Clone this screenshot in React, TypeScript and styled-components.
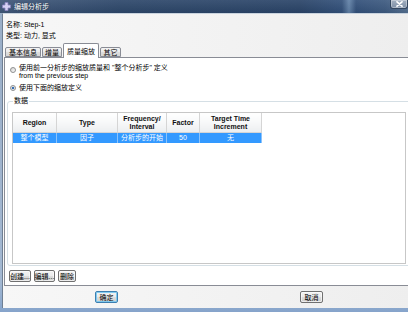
import React from 'react';
import styled, { createGlobalStyle } from 'styled-components';

const GlobalStyle = createGlobalStyle`
  html, body {
    margin: 0;
    padding: 0;
    background: #fff;
  }
  body {
    font-family: "Liberation Sans", "Noto Sans CJK SC", sans-serif;
    font-size: 7px;
    color: #000;
  }
`;

const Viewport = styled.div`
  width: 408px;
  height: 312px;
  overflow: hidden;
`;

const Frame = styled.div`
  width: 414px;
  height: 312px;
  display: flex;
  flex-direction: column;
  background: linear-gradient(180deg, #9aaec7 0%, #a3b8d2 90%, #86a4cb 100%);
`;

const TitleBar = styled.div`
  flex: none;
  height: 13px;
  display: flex;
  align-items: center;
  padding-left: 2px;
  background:
    linear-gradient(180deg, rgba(255, 255, 255, 0.08), rgba(0, 0, 0, 0.06)),
    linear-gradient(90deg, #3f5779 0px, #2d476a 120px, #2a4468 300px, #32507a 342px, #6282a8 349px, #32507a 356px, #3d5a80 385px, #5a7594 414px);
`;

const TitleText = styled.span`
  margin-left: 3px;
  color: #fff;
  line-height: 13px;
  text-shadow: 0 0 2px rgba(0, 0, 0, 0.5);
`;

const CloseButton = styled.div`
  margin-left: auto;
  margin-right: 6px;
  align-self: flex-start;
  width: 18px;
  height: 9px;
  display: flex;
  align-items: center;
  justify-content: center;
  box-sizing: border-box;
  border: 1px solid #33465e;
  border-top: none;
  border-radius: 0 0 3px 3px;
  background: linear-gradient(180deg, #a3b0c0, #7d8ea5);
  box-shadow: inset 0 0 0 1px rgba(255, 255, 255, 0.35);
`;

const Body = styled.div`
  flex: 1;
  display: flex;
  flex-direction: column;
  margin: 0 0 4px 2px;
  border-left: 1px solid #6f7f93;
  border-top: 1px solid #c9d3de;
  padding-top: 4.5px;
  background: linear-gradient(90deg, #f7f7f7, #eeeeee);
`;

const InfoRow = styled.div`
  height: 11.5px;
  line-height: 11.5px;
  padding-left: 3px;
  white-space: nowrap;
`;

const TabStrip = styled.div`
  flex: none;
  height: 14px;
  margin-top: 1.5px;
  padding-left: 2px;
  display: flex;
  align-items: flex-end;
`;

const Tab = styled.div<{ $active?: boolean; $w: number }>`
  box-sizing: border-box;
  width: ${p => p.$w}px;
  height: ${p => (p.$active ? 15 : 10)}px;
  margin-bottom: ${p => (p.$active ? -1 : 0)}px;
  margin-right: 1px;
  display: flex;
  align-items: center;
  justify-content: center;
  border: 1px solid #898c95;
  border-bottom: ${p => (p.$active ? 'none' : '1px solid #898c95')};
  border-radius: 2px 2px 0 0;
  background: ${p =>
    p.$active ? '#ffffff' : 'linear-gradient(180deg, #f3f3f3 0%, #ebebeb 50%, #dedede 51%, #d6d6d6 100%)'};
  position: relative;
  z-index: ${p => (p.$active ? 1 : 0)};
  white-space: nowrap;
`;

const Panel = styled.div`
  flex: 1;
  display: flex;
  flex-direction: column;
  margin-left: 1px;
  margin-right: 2px;
  border: 1px solid #898c95;
  background: #ffffff;
  padding: 6px 0 0 1px;
`;

const RadioRow = styled.div<{ $gap?: number }>`
  display: flex;
  align-items: flex-start;
  padding-left: 4px;
  margin-top: ${p => p.$gap ?? 0}px;
  line-height: 8px;
`;

const RadioCircle = styled.span<{ $checked?: boolean; $top: number }>`
  flex: none;
  box-sizing: border-box;
  width: 6px;
  height: 6px;
  margin-top: ${p => p.$top}px;
  margin-right: 3px;
  border: 1px solid #8e8f8f;
  border-radius: 50%;
  background: ${p =>
    p.$checked
      ? 'radial-gradient(circle, #2d64a8 0, #3c78c0 1.3px, #e8e8e8 1.6px, #f8f8f8 100%)'
      : 'linear-gradient(135deg, #d4d4d4, #fafafa)'};
`;

const Group = styled.fieldset`
  margin: 5px 0 0 1px;
  padding: 7px 4px 1px 4px;
  border: 1px solid #d5dfe5;
  border-radius: 3px;
`;

const GroupLabel = styled.legend`
  padding: 0 1px;
  margin-left: 1px;
  line-height: 8px;
`;

const TableBox = styled.div`
  box-sizing: border-box;
  width: 394px;
  height: 152px;
  border: 1px solid #c7c7c7;
  background: #ffffff;
`;

const Grid = styled.table`
  border-collapse: collapse;
  table-layout: fixed;
`;

const HeadCell = styled.th<{ $w: number }>`
  width: ${p => p.$w}px;
  height: 19px;
  padding: 0;
  font-weight: bold;
  line-height: 8px;
  text-align: center;
  color: #111;
  border-right: 1px solid #d5d5d5;
  border-bottom: 1px solid #d5d5d5;
  background: linear-gradient(180deg, #ffffff 0%, #f7f8f9 50%, #eceef0 100%);
`;

const Cell = styled.td`
  height: 10px;
  padding: 0;
  line-height: 10px;
  text-align: center;
  color: #ffffff;
  background: #3399ff;
  border-right: 1px solid #8cc3fb;
  white-space: nowrap;
`;

const ButtonRow = styled.div`
  display: flex;
  gap: 3px;
  margin-top: 4px;
  padding-left: 3px;
`;

const Button = styled.div<{ $w: number; $focused?: boolean }>`
  box-sizing: border-box;
  width: ${p => p.$w}px;
  height: 12px;
  display: flex;
  align-items: center;
  justify-content: center;
  border: 1px solid ${p => (p.$focused ? '#3c7fb1' : '#707070')};
  border-radius: 2px;
  background: linear-gradient(180deg, #f2f2f2 0%, #ebebeb 50%, #dddddd 51%, #cfcfcf 100%);
  box-shadow: inset 0 0 0 1px ${p => (p.$focused ? 'rgba(120, 200, 240, 0.9)' : 'rgba(255, 255, 255, 0.6)')};
  white-space: nowrap;
`;

const Footer = styled.div`
  flex: none;
  height: 22px;
  display: flex;
  align-items: center;
  gap: 182px;
  padding-left: 92px;
`;

const TitleIcon = () => (
  <svg width="9" height="9" viewBox="0 0 9 9">
    <path d="M3 0.5h3v2.5h2.5v3H6v2.5H3V6H0.5V3H3z" fill="#d6d2f4" stroke="#8a84c0" strokeWidth="0.8" />
  </svg>
);

const CloseIcon = () => (
  <svg width="7" height="6" viewBox="0 0 7 6">
    <path d="M1 0.8L6 5.2M6 0.8L1 5.2" stroke="#fff" strokeWidth="1.6" strokeLinecap="round" />
  </svg>
);

const tabs = [
  { label: '基本信息', w: 36 },
  { label: '增量', w: 20 },
  { label: '质量缩放', w: 36, active: true },
  { label: '其它', w: 21 },
];

const columns = [
  { w: 43, label: ['Region'] },
  { w: 60, label: ['Type'] },
  { w: 48, label: ['Frequency/', 'Interval'] },
  { w: 32, label: ['Factor'] },
  { w: 61, label: ['Target Time', 'Increment'] },
];

const rows = [['整个模型', '因子', '分析步的开始', '50', '无']];

export default function App() {
  return (
    <Viewport>
      <GlobalStyle />
      <Frame>
        <TitleBar>
          <TitleIcon />
          <TitleText>编辑分析步</TitleText>
          <CloseButton>
            <CloseIcon />
          </CloseButton>
        </TitleBar>
        <Body>
          <InfoRow>名称: Step-1</InfoRow>
          <InfoRow>类型: 动力, 显式</InfoRow>
          <TabStrip>
            {tabs.map(t => (
              <Tab key={t.label} $w={t.w} $active={t.active}>
                {t.label}
              </Tab>
            ))}
          </TabStrip>
          <Panel>
            <RadioRow>
              <RadioCircle $top={3} />
              <div>
                使用前一分析步的缩放质量和 "整个分析步" 定义
                <br />
                from the previous step
              </div>
            </RadioRow>
            <RadioRow $gap={4}>
              <RadioCircle $checked $top={1} />
              <div>使用下面的缩放定义</div>
            </RadioRow>
            <Group>
              <GroupLabel>数据</GroupLabel>
              <TableBox>
                <Grid>
                  <thead>
                    <tr>
                      {columns.map(c => (
                        <HeadCell key={c.label[0]} $w={c.w}>
                          {c.label.map((l, i) => (
                            <React.Fragment key={l}>
                              {i > 0 && <br />}
                              {l}
                            </React.Fragment>
                          ))}
                        </HeadCell>
                      ))}
                    </tr>
                  </thead>
                  <tbody>
                    {rows.map(r => (
                      <tr key={r[0]}>
                        {r.map((v, i) => (
                          <Cell key={i}>{v}</Cell>
                        ))}
                      </tr>
                    ))}
                  </tbody>
                </Grid>
              </TableBox>
            </Group>
            <ButtonRow>
              <Button $w={22}>创建...</Button>
              <Button $w={21}>编辑...</Button>
              <Button $w={18}>删除</Button>
            </ButtonRow>
          </Panel>
          <Footer>
            <Button $w={23} $focused>确定</Button>
            <Button $w={23}>取消</Button>
          </Footer>
        </Body>
      </Frame>
    </Viewport>
  );
}
